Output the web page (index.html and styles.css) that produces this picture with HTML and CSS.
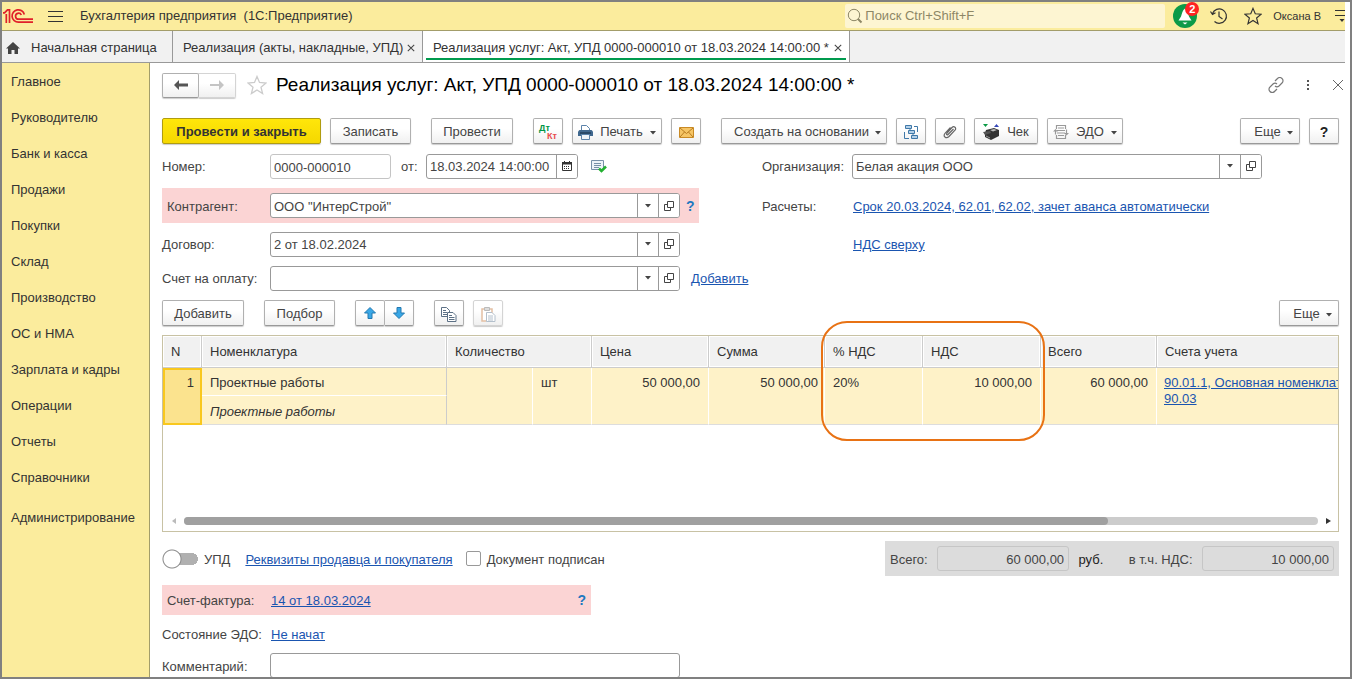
FILE: index.html
```html
<!DOCTYPE html>
<html lang="ru">
<head>
<meta charset="utf-8">
<title>Реализация услуг</title>
<link rel="stylesheet" href="styles.css">
</head>
<body>
<svg class="defs" width="0" height="0" aria-hidden="true">
  <symbol id="i-open" viewBox="0 0 10 10"><path d="M3.500.5h6v6h-6zM3 3.500H.5v6h6V7" fill="none" stroke="#444"/></symbol>
  <symbol id="i-caret" viewBox="0 0 6 4"><path d="M0 0h6L3 3.600z" fill="#444"/></symbol>
  <symbol id="i-x" viewBox="0 0 10 10"><path d="M1 1l8 8M9 1L1 9" fill="none" stroke="currentColor" stroke-width="1.300"/></symbol>
  <symbol id="i-star" viewBox="0 0 20 20"><path d="M10 1.500l2.500 6 6.500.5-5 4.200 1.600 6.300L10 15l-5.600 3.500L6 12.200 1 8l6.500-.5z" fill="none" stroke="currentColor" stroke-width="1.300"/></symbol>
</svg>
<div class="window">
  <header class="topbar">
    <svg class="logo" viewBox="0 0 30 16"><g fill="none" stroke="#e0202a" stroke-width="1.700"><path d="M0 4.800h1.500L4.500 1.800h2V15M3.300 15V6"/><path d="M21.300 6.500A6.200 6.200 0 1 0 15.500 14.200H30"/><path d="M18.300 7A3 3 0 1 0 15.500 11.200H30"/></g></svg>
    <button class="plain menu" aria-label="Меню"><svg width="16" height="13" viewBox="0 0 16 13"><path d="M0 1.500h15M0 6.500h15M0 11.500h15" stroke="#333"/></svg></button>
    <h1 class="app-title">Бухгалтерия предприятия&nbsp; (1С:Предприятие)</h1>
    <label class="search"><svg width="16" height="16" viewBox="0 0 16 16"><circle cx="7" cy="7" r="5.700" fill="none" stroke="#8d8766"/><path d="M11 11l3.500 3.500" stroke="#8d8766" stroke-width="2"/></svg><input type="search" placeholder="Поиск Ctrl+Shift+F" aria-label="Поиск"></label>
    <button class="plain bell" aria-label="Уведомления"><svg width="24" height="24" viewBox="0 0 24 24"><circle cx="12" cy="12" r="12" fill="#0c9a48"/><path d="M12 4.500c-2.500 1.500-3 5-4 8L5.500 16.500h13L16 12.500c-1-3-1.500-6.500-4-8zM9.500 18.500h5L12 20.500z" fill="#fff"/></svg><span class="badge">2</span></button>
    <button class="plain history" aria-label="История"><svg width="18" height="18" viewBox="0 0 18 18"><path d="M2.500 6.500A7.200 7.200 0 1 1 4.500 14.500M.5 4.500L2.500 7.500 5.500 5.800M9 4.500V9.500l3.500 2.500" fill="none" stroke="#333" stroke-width="1.200"/></svg></button>
    <button class="plain fav" aria-label="Избранное"><svg width="18" height="18"><use href="#i-star"/></svg></button>
    <button class="plain user">Оксана В</button>
    <button class="plain more" aria-label="Настройки"><svg width="10" height="14" viewBox="0 0 10 14"><path d="M0 1.500h10M0 6.500h10" stroke="#333"/><path d="M4.500 10h5L7 13z" fill="#333"/></svg></button>
  </header>
  <nav class="tabs">
    <a class="tab home" href="#"><svg width="14" height="12" viewBox="0 0 14 12"><path d="M7 0l7 6.500h-2V12H8.500V8h-3v4H2V6.500H0z" fill="#444"/></svg>Начальная страница</a>
    <div class="tab list"><a href="#">Реализация (акты, накладные, УПД)</a><button class="plain x" aria-label="Закрыть"><svg width="8" height="8"><use href="#i-x"/></svg></button></div>
    <div class="tab active"><a href="#">Реализация услуг: Акт, УПД 0000-000010 от 18.03.2024 14:00:00 *</a><button class="plain x" aria-label="Закрыть"><svg width="8" height="8"><use href="#i-x"/></svg></button></div>
  </nav>
  <div class="body">
    <nav class="side">
      <a href="#">Главное</a><a href="#">Руководителю</a><a href="#">Банк и касса</a><a href="#">Продажи</a><a href="#">Покупки</a><a href="#">Склад</a><a href="#">Производство</a><a href="#">ОС и НМА</a><a href="#">Зарплата и кадры</a><a href="#">Операции</a><a href="#">Отчеты</a><a href="#">Справочники</a><a class="admin" href="#">Администрирование</a>
    </nav>
    <main class="doc">
      <div class="heading">
        <div class="pair nav">
          <button class="btn" aria-label="Назад"><svg width="14" height="10" viewBox="0 0 14 10"><path d="M0 5l5-5v3.500h9v3H5V10z" fill="#555"/></svg></button><button class="btn off" aria-label="Вперед"><svg width="14" height="10" viewBox="0 0 14 10"><path d="M14 5L9 0v4H0v2h9v4z" fill="#c4c4c4"/></svg></button>
        </div>
        <button class="plain mark" aria-label="В избранное"><svg width="20" height="20"><use href="#i-star"/></svg></button>
        <h2>Реализация услуг: Акт, УПД 0000-000010 от 18.03.2024 14:00:00 *</h2>
        <div class="tools">
          <button class="plain" aria-label="Ссылка"><svg width="16" height="16" viewBox="0 0 16 16"><g fill="none" stroke="#777" stroke-width="1.200"><path d="M7 4l2.500-2.500a3 3 0 0 1 4.500 0 3 3 0 0 1 0 4.500L11 9a3 3 0 0 1-4 0"/><path d="M9 12l-2.500 2.500a3 3 0 0 1-4.500 0 3 3 0 0 1 0-4.500L5 7a3 3 0 0 1 4 0"/></g></svg></button>
          <button class="plain" aria-label="Меню"><svg width="4" height="12" viewBox="0 0 4 12"><path d="M1 1h2v2H1zM1 5h2v2H1zM1 9h2v2H1z" fill="#555"/></svg></button>
          <button class="plain" aria-label="Закрыть"><svg width="12" height="12" viewBox="0 0 12 12"><path d="M1 1l10 10M11 1L1 11" stroke="#666"/></svg></button>
        </div>
      </div>
      <div class="cmd">
        <button class="btn main w-159">Провести и закрыть</button>
        <button class="btn w-81">Записать</button>
        <button class="btn w-82 gap">Провести</button>
        <button class="btn w-30 gap" aria-label="Проводки"><span class="dk"><b>Дт</b><b class="kt">Кт</b></span></button>
        <button class="btn w-90"><svg width="15" height="15" viewBox="0 0 15 15"><path d="M3.500 7V.5h5l3 3V7" fill="#fff" stroke="#5b83ab"/><path d="M1.500 5h12l1.500 1.500V11H0V6.500z" fill="#40688f"/><path d="M2 8h11" stroke="#142c45"/><path d="M3.500 9.500h8v5h-8z" fill="#eef4fa" stroke="#5b83ab"/></svg>Печать<svg class="car" width="6" height="4"><use href="#i-caret"/></svg></button>
        <button class="btn w-30" aria-label="Отправить"><svg width="15" height="11" viewBox="0 0 15 11"><path d="M.5.5h14v10H.5z" fill="#f6c565" stroke="#c98a25"/><path d="M1 1l6.500 5.500L14 1M1 10l4.500-5M14 10L9.500 5" fill="none" stroke="#b87c20"/></svg></button>
        <button class="btn drop w-166 gap">Создать на основании<svg class="car" width="6" height="4"><use href="#i-caret"/></svg></button>
        <button class="btn w-30" aria-label="Связанные документы"><svg width="15" height="15" viewBox="0 0 15 15"><g fill="#b4d0e8" stroke="#3f78a8"><path d="M1.500.5h6v3h-6zM4.500 5.500h6v3h-6zM7.500 10.500h6v3h-6z"/><path d="M10 1.500h3.500V7M.5 7v6.500H5M6 3.500v2M9 8.500v2" fill="none"/></g></svg></button>
        <button class="btn w-30" aria-label="Файлы"><svg width="14" height="14" viewBox="0 0 14 14"><path d="M10.500 4L5 9.500c-1 1-2 0-1-1.300L9 2.500c2-2 5 .4 3 2.700l-6 6.300c-3 2.800-6.500-.4-4-3.200l5.500-5.800" fill="none" stroke="#666" stroke-width="1.200"/></svg></button>
        <button class="btn w-64"><svg width="17" height="17" viewBox="0 0 17 17"><path d="M0 0h5L2.500 3z" fill="#0a9a45"/><path d="M11 3h5l-2.500-3z" fill="#3446b8"/><path d="M3 6l8-2 5 2v6l-8 4-6-3V9z" fill="#333"/><path d="M7 6l4-1 3 1-4 1.500z" fill="#bbb"/><path d="M0 8l7-1 1 2-6 2z" fill="#555"/><path d="M3 12l4 2" stroke="#999"/></svg>Чек</button>
        <button class="btn w-76"><svg width="16" height="16" viewBox="0 0 16 16"><g fill="none" stroke="#999" stroke-width="1.200"><path d="M3.500 5V1.500h9V5M12.500 11v3.500h-9V11M5 4h6M4 6.500h8M4 9h8M5 11.500h6"/><path d="M2.500 6.500v4M13.500 5.500v4"/></g><path d="M0 7.500h5L2.500 5zM11 9h5l-2.500 2.500z" fill="#999"/></svg>ЭДО<svg class="car" width="6" height="4"><use href="#i-caret"/></svg></button>
        <button class="btn drop w-60 right">Еще<svg class="car" width="6" height="4"><use href="#i-caret"/></svg></button>
        <button class="btn w-30 help" aria-label="Справка">?</button>
      </div>
      <div class="form">
        <div class="col">
          <div class="row">
            <label class="lab" for="num">Номер:</label>
            <input class="box num" id="num" value="0000-000010">
            <label class="from" for="date">от:</label>
            <span class="combo date"><input id="date" value="18.03.2024 14:00:00"><button aria-label="Календарь"><svg width="10" height="10" viewBox="0 0 10 10"><path d="M.5 1.500h9v8h-9z" fill="none" stroke="#333"/><path d="M0 1h10v2.500H0zM2 0h1v2H2zM7 0h1v2H7z" fill="#333"/><path d="M2 5.500h6M2 7.500h6" stroke="#333" stroke-dasharray="1 1"/></svg></button></span>
            <svg class="posted" width="16" height="13" viewBox="0 0 16 13"><path d="M.5.5h12v9H.5z" fill="#eef3f8" stroke="#7890a8"/><path d="M3 3.500h7M3 5.500h7M3 7.500h5" stroke="#7890a8"/><path d="M8 8.500l2.500 2.500 4.500-4.500" fill="none" stroke="#22b030" stroke-width="2.500"/></svg>
          </div>
          <div class="row pink">
            <label class="lab" for="agent">Контрагент:</label>
            <span class="combo wide"><input id="agent" value="ООО &quot;ИнтерСтрой&quot;"><button aria-label="Выбрать"><svg width="6" height="4"><use href="#i-caret"/></svg></button><button aria-label="Открыть"><svg width="10" height="10"><use href="#i-open"/></svg></button></span>
            <button class="plain q">?</button>
          </div>
          <div class="row">
            <label class="lab" for="deal">Договор:</label>
            <span class="combo wide"><input id="deal" value="2 от 18.02.2024"><button aria-label="Выбрать"><svg width="6" height="4"><use href="#i-caret"/></svg></button><button aria-label="Открыть"><svg width="10" height="10"><use href="#i-open"/></svg></button></span>
          </div>
          <div class="row">
            <label class="lab" for="bill">Счет на оплату:</label>
            <span class="combo wide"><input id="bill"><button aria-label="Выбрать"><svg width="6" height="4"><use href="#i-caret"/></svg></button><button aria-label="Открыть"><svg width="10" height="10"><use href="#i-open"/></svg></button></span>
            <a class="link add" href="#">Добавить</a>
          </div>
        </div>
        <div class="col second">
          <div class="row org">
            <label class="lab" for="org">Организация:</label>
            <span class="combo wide"><input id="org" value="Белая акация ООО"><button aria-label="Выбрать"><svg width="6" height="4"><use href="#i-caret"/></svg></button><button aria-label="Открыть"><svg width="10" height="10"><use href="#i-open"/></svg></button></span>
          </div>
          <div class="row mid"><span class="lab">Расчеты:</span><a class="link" href="#">Срок 20.03.2024, 62.01, 62.02, зачет аванса автоматически</a></div>
          <div class="row"><span class="lab"></span><a class="link" href="#">НДС сверху</a></div>
        </div>
      </div>
      <div class="cmd table-cmd">
        <button class="btn w-82">Добавить</button>
        <button class="btn w-71 gap">Подбор</button>
        <div class="pair gap arrows"><button class="btn" aria-label="Вверх"><svg width="12" height="12" viewBox="0 0 12 12"><path d="M6 .5l5.500 5.500H8v5.500H4V6H.5z" fill="#39a7e6" stroke="#2378b0"/></svg></button><button class="btn" aria-label="Вниз"><svg width="12" height="12" viewBox="0 0 12 12"><path d="M6 11.500L.5 6H4V.5h4V6h3.500z" fill="#39a7e6" stroke="#2378b0"/></svg></button></div>
        <button class="btn w-30 gap" aria-label="Копировать"><svg width="16" height="15" viewBox="0 0 16 15"><g fill="#fff" stroke="#5d7186"><path d="M.5.5h5l3 3v6h-8z"/><path d="M2 3.500h3M2 5.500h4M2 7.500h4"/><path d="M6.500 5.500h5.500l3 3v6H6.500z"/><path d="M8 8.500h3M8 10.500h5.500M8 12.500h5.500"/></g></svg></button>
        <button class="btn w-30 off" aria-label="Вставить"><svg width="15" height="15" viewBox="0 0 15 15"><g fill="#fff"><path d="M1 2h10v12H1z" stroke="#e4c0a4" stroke-width="1.500"/><path d="M3.500.5h5v3h-5z" fill="#ddd" stroke="#bbb"/><path d="M5.500 5.500h5.500l3 3v6H5.500z" stroke="#b4c0cc"/><path d="M7 9h5M7 11h5M7 13h5" stroke="#b4c0cc"/></g></svg></button>
        <button class="btn drop w-60 right">Еще<svg class="car" width="6" height="4"><use href="#i-caret"/></svg></button>
      </div>
      <div class="grid-wrap">
        <div class="clip">
        <table class="grid">
          <colgroup><col class="c-n"><col class="c-name"><col class="c-qty"><col class="c-unit"><col class="c-price"><col class="c-sum"><col class="c-rate"><col class="c-vat"><col class="c-total"><col class="c-acc"></colgroup>
          <thead><tr><th>N</th><th>Номенклатура</th><th colspan="2">Количество</th><th>Цена</th><th>Сумма</th><th>% НДС</th><th>НДС</th><th class="tight">Всего</th><th>Счета учета</th></tr></thead>
          <tbody>
            <tr><td class="n" rowspan="2">1</td><td class="name">Проектные работы</td><td rowspan="2"></td><td rowspan="2">шт</td><td class="r" rowspan="2">50 000,00</td><td class="r edge" rowspan="2">50 000,00</td><td rowspan="2">20%</td><td class="r" rowspan="2">10 000,00</td><td class="r" rowspan="2">60 000,00</td><td class="tight" rowspan="2"><a class="link" href="#">90.01.1, Основная номенклат<br>90.03</a></td></tr>
            <tr><td class="desc">Проектные работы</td></tr>
          </tbody>
        </table>
        </div>
        <div class="callout"></div>
        <div class="scroll"><svg width="4" height="6" viewBox="0 0 4 6"><path d="M4 0v6L0 3z" fill="#bbb"/></svg><div class="track"><div class="thumb"></div></div><svg width="5" height="6" viewBox="0 0 5 6"><path d="M0 0v6l5-3z" fill="#333"/></svg></div>
      </div>
      <div class="foot">
        <label class="switch"><input type="checkbox" role="switch"><span>УПД</span></label>
        <a class="link req" href="#">Реквизиты продавца и покупателя</a>
        <label class="signed"><input type="checkbox"><span>Документ подписан</span></label>
        <div class="totals">
          <label for="t1">Всего:</label><input id="t1" value="60 000,00" readonly><span class="rub">руб.</span>
          <label for="t2">в т.ч. НДС:</label><input id="t2" value="10 000,00" readonly>
        </div>
      </div>
      <div class="row invoice"><span class="lab">Счет-фактура:</span><a class="link" href="#">14 от 18.03.2024</a><button class="plain q">?</button></div>
      <div class="row edo"><span class="lab">Состояние ЭДО:</span><a class="link" href="#">Не начат</a></div>
      <div class="row comment"><label class="lab" for="com">Комментарий:</label><input class="box" id="com"></div>
    </main>
  </div>
</div>
</body>
</html>
```
FILE: styles.css
```css
* { box-sizing: border-box; }
body { margin: 0; background: #fff; color: #444; font: 13px/16px "Liberation Sans", Arial, sans-serif; }
.defs { position: absolute; }
button, input { font: inherit; color: inherit; }
a { color: inherit; text-decoration: none; }
svg { display: block; flex: none; }
.plain { border: 0; background: none; padding: 0; }
.window { height: 100vh; overflow: hidden; border: 2px solid #808080; display: flex; flex-direction: column; }

.topbar { flex: none; height: 29px; margin-right: 5px; background: #fbec9d; border-bottom: 1px solid #a39d6a; display: flex; align-items: center; overflow: hidden; color: #333; }
.logo { width: 30px; height: 16px; margin-left: 1px; }
.menu { margin-left: 15px; }
.app-title { margin: 0 0 0 16px; font-size: 13px; font-weight: 400; }
.search { margin-left: auto; width: 320px; height: 24px; background: #fdf5d2; border-radius: 2px; display: flex; align-items: center; padding-left: 2px; gap: 2px; }
.search input { flex: 1; min-width: 0; border: 0; background: none; padding: 0; outline: 0; }
.search input::placeholder { color: #8d8766; opacity: 1; }
.bell { position: relative; margin-left: 8px; }
.badge { position: absolute; left: 12px; top: -2px; width: 14px; height: 14px; border-radius: 7px; background: #f22; color: #fff; font: bold 11px/14px "Liberation Sans", Arial, sans-serif; }
.history { margin-left: 13px; }
.fav { margin-left: 16px; }
.user { margin-left: 11px; font-size: 11px; }
.more { margin-left: 14px; }

.tabs { flex: none; height: 32px; margin-right: 5px; background: #f1f1f1; border-bottom: 1px solid #999; display: flex; color: #333; }
.tab { border-right: 1px solid #999; display: flex; align-items: center; padding-top: 2px; white-space: nowrap; }
.home { width: 171px; padding-left: 4px; gap: 11px; }
.list { width: 250px; padding-left: 10px; padding-right: 7px; justify-content: space-between; }
.active { width: 427px; padding-left: 10px; padding-right: 7px; justify-content: space-between; background: linear-gradient(#009a4e, #009a4e) 3px 27px / 420px 2px no-repeat, #fff; }
.x { color: #444; }

.body { flex: 1; min-height: 0; display: flex; }
.side { flex: none; width: 148px; background: #fbec9d; border-right: 1px solid #a39d6a; padding: 1px 0 0 9px; display: flex; flex-direction: column; color: #333; }
.side a { height: 36px; line-height: 36px; }
.side .admin { margin-top: 4px; }
.doc { flex: 1; min-width: 0; padding: 8px 11px 0 12px; display: flex; flex-direction: column; }
.heading, .cmd, .form { flex: none; }

.btn { height: 26px; padding: 2px 0 0; border: 1px solid #b0b0b0; border-bottom-color: #999; border-radius: 2px; background: linear-gradient(#fff 40%, #f0f0f0); box-shadow: 0 1px 1px #ccc; display: flex; align-items: center; justify-content: center; gap: 7px; white-space: nowrap; }
.drop { padding-left: 7px; gap: 6px; }
.car { margin-top: 2px; }
.off { border-color: #d4d4d4; }
.main { background: linear-gradient(#ffe60a, #f5d800); border-color: #b09c10; font-weight: bold; color: #333; }
.pair { display: flex; }
.pair .btn { padding-top: 0; }
.pair .btn + .btn { border-left: 0; border-radius: 0 2px 2px 0; }
.nav .btn { width: 37px; height: 25px; }
.arrows .btn { width: 30px; }
.arrows .btn + .btn { width: 29px; }
.w-30 { width: 30px; } .w-60 { width: 60px; } .w-64 { width: 64px; } .w-71 { width: 71px; } .w-76 { width: 76px; } .w-81 { width: 81px; } .w-82 { width: 82px; } .w-90 { width: 90px; } .w-159 { width: 159px; } .w-166 { width: 166px; }
.right { margin-left: auto; }
.help { font-weight: bold; font-size: 14px; color: #222; }

.heading { display: flex; align-items: center; height: 28px; }
.mark { margin-left: 11px; color: #ccc; }
.heading h2 { margin: 0 0 0 9px; font-size: 19px; line-height: 24px; font-weight: 400; color: #000; white-space: nowrap; }
.tools { margin: 0 -5px 0 auto; display: flex; align-items: center; gap: 22px; }
.cmd { display: flex; gap: 9px; margin-top: 19px; }
.cmd .gap { margin-left: 11px; }
.dk { display: flex; flex-direction: column; width: 18px; font-size: 9px; line-height: 8px; color: #009646; text-align: left; }
.dk .kt { color: #e84c4c; text-align: right; }

.form { display: flex; margin-top: 5px; }
.col { flex: none; width: 600px; }
.second { flex: 1; min-width: 0; width: auto; }
.row { display: flex; align-items: center; height: 34px; }
.lab { flex: none; width: 108px; padding-top: 2px; }
.second .lab { width: 91px; }
.second .org .lab { width: 90px; }
.box, .combo { height: 25px; border: 1px solid #999; border-radius: 3px; background: #fff; padding: 2px 3px 0; }
.num { width: 121px; border-color: #c4c4c4; }
.from { width: 35px; padding: 2px 0 0 10px; }
.combo { display: flex; padding: 0; overflow: hidden; }
.combo input { flex: 1; min-width: 0; border: 0; padding: 2px 3px 0; outline: 0; background: none; }
.combo button { flex: none; width: 21px; border: 0; border-left: 1px solid #999; padding: 0; background: #fff; display: flex; align-items: center; justify-content: center; }
.date { width: 152px; }
.wide { width: 410px; }
.posted { margin-left: 13px; }
.pink { background: #fbd4d4; width: 537px; height: 35px; margin: 5px 0 4px; padding-left: 5px; }
.pink .lab { width: 103px; }
.second .mid { height: 35px; margin: 5px 0 4px; }
.q { margin-left: 6px; font-weight: bold; font-size: 14px; color: #1e78c0; }
.link { color: #1a55b0; text-decoration: underline; }
.row .link, .foot > .link { padding-top: 2px; }
.add { margin-left: 11px; }
.table-cmd { margin-top: 5px; }

.grid-wrap { position: relative; flex: none; height: 197px; margin-top: 9px; border: 1px solid #c8c2a4; }
.clip { overflow: hidden; }
.grid { table-layout: fixed; width: 1260px; border-collapse: separate; border-spacing: 0; color: #333; }
.c-n { width: 39px; } .c-name { width: 245px; } .c-qty { width: 86px; } .c-unit { width: 59px; } .c-price { width: 117px; } .c-sum { width: 116px; } .c-rate { width: 98px; } .c-vat { width: 118px; } .c-total { width: 116px; } .c-acc { width: 266px; }
.grid th { height: 32px; padding: 0 8px; background: #f1f1f1; border-right: 1px solid #ccc; border-bottom: 1px solid #ccc; box-shadow: inset 0 0 0 1px #fff; font-weight: 400; text-align: left; }
.grid .tight { padding-left: 7px; }
.grid td { height: 28px; padding: 7px 8px 0; vertical-align: top; background: #fef2c8; border-right: 1px solid #fff; border-bottom: 1px solid #ddd; line-height: 16px; white-space: nowrap; }
.grid .n { background: #fbe38e; border: 2px solid #f9c81e; text-align: right; padding: 5px 6px 0; }
.grid .r { text-align: right; }
.grid .edge { padding-right: 6px; }
.grid .name { border-bottom-color: #fff; border-right-color: #ccc; }
.grid .desc { height: 29px; padding-top: 8px; border-right-color: #ccc; font-style: italic; }
.callout { position: absolute; left: 658px; top: -15px; width: 224px; height: 120px; border: 2px solid #e87214; border-radius: 26px; pointer-events: none; }
.scroll { position: absolute; left: 9px; right: 7px; bottom: 6px; display: flex; align-items: center; gap: 8px; }
.track { flex: 1; height: 8px; border-radius: 4px; background: #ccc; }
.thumb { width: 81.5%; height: 8px; border-radius: 4px; background: #a0a0a0; }

.foot { flex: none; display: flex; align-items: center; height: 35px; margin-top: 9px; }
.switch, .signed { display: flex; align-items: center; gap: 6px; }
.switch span, .signed span { padding-top: 2px; }
.switch input { appearance: none; margin: 0; width: 36px; height: 20px; background: radial-gradient(circle at 10px 10px, #fff 8px, #888 9px, #888 9px, transparent 10px), linear-gradient(#b0b0b0, #b0b0b0) 12px 4px / 20px 12px no-repeat, radial-gradient(circle at 30px 10px, #b0b0b0 6px, transparent 6px); }
.req { margin-left: 15px; }
.signed { margin-left: 13px; }
.signed input { appearance: none; margin: 0; width: 15px; height: 15px; border: 1px solid #999; border-radius: 2px; background: #fff; }
.totals { margin-left: auto; height: 35px; width: 454px; padding: 0 5px; background: #dcdcdc; display: flex; align-items: center; justify-content: space-between; }
.totals input { width: 132px; height: 25px; border: 1px solid #c6c6c6; border-radius: 3px; background: none; text-align: right; padding: 2px 4px 0; }
.totals label, .totals span { padding-top: 2px; }
.rub { color: #222; margin-right: 16px; }
.invoice { flex: none; width: 429px; height: 30px; margin-top: 9px; padding: 0 5px; background: #fbd4d4; }
.invoice .lab { width: 104px; }
.invoice .q { margin-left: auto; }
.edo { flex: none; height: 28px; margin-top: 5px; }
.edo .lab { width: 109px; }
.comment { flex: none; height: 25px; margin-top: 5px; }
.comment .box { width: 410px; }
```
